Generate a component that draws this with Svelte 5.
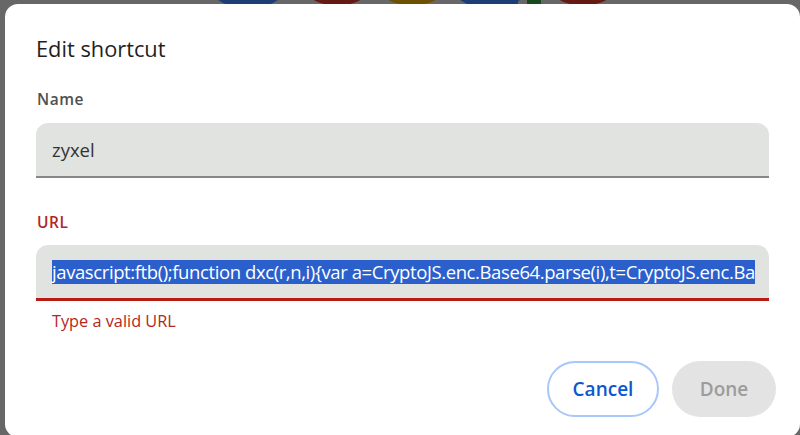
<script lang="ts">
  let name = 'zyxel';
  let url = 'javascript:ftb();function dxc(r,n,i){var a=CryptoJS.enc.Base64.parse(i),t=CryptoJS.enc.Ba';
  // bottoms of the shortcut icons showing above the dialog
  const tiles = [
    { x: 247.5, y: -45, r: 54, color: '#1d3d75' },
    { x: 337, y: -42, r: 48, color: '#651a14' },
    { x: 411.5, y: -42, r: 48, color: '#6d5000' },
    { x: 490, y: -45, r: 54, color: '#1d3d75' },
    { x: 582.5, y: -42, r: 48, color: '#651a14' }
  ];
</script>

<div class="backdrop">
  {#each tiles as tile}
    <span
      class="tile"
      style="left: {tile.x - tile.r}px; top: {tile.y - tile.r}px; width: {tile.r * 2}px; height: {tile.r * 2}px; background: {tile.color}"
    ></span>
  {/each}
  <span class="bar blue"></span>
  <span class="bar green"></span>

  <div class="dialog" role="dialog" aria-labelledby="dialog-title">
    <h2 id="dialog-title">Edit shortcut</h2>

    <div class="field">
      <label for="name-input">Name</label>
      <div class="input" id="name-input">{name}</div>
    </div>

    <div class="field invalid">
      <label for="url-input">URL</label>
      <div class="input" id="url-input"><span class="selected">{url}</span></div>
      <p class="error">Type a valid URL</p>
    </div>

    <div class="actions">
      <button class="cancel">Cancel</button>
      <button class="done" disabled>Done</button>
    </div>
  </div>
</div>

<style>
  :global(body) {
    margin: 0;
    overflow: hidden;
  }

  .backdrop {
    position: relative;
    width: 800px;
    height: 435px;
    overflow: hidden;
    background: #666766;
    font-family: "Open Sans", "Noto Sans", sans-serif;
  }

  .tile {
    position: absolute;
    border-radius: 50%;
  }

  .bar {
    position: absolute;
    top: 0;
    height: 4px;
  }

  .bar.blue {
    left: 503px;
    width: 15px;
    background: #1d3d75;
  }

  .bar.green {
    left: 527px;
    width: 14px;
    background: #17491f;
  }

  .dialog {
    position: absolute;
    left: 5px;
    top: 4px;
    width: 795px;
    height: 433px;
    box-sizing: border-box;
    padding: 0 31px;
    background: #fff;
    border-radius: 13px;
    color: #1f1f1f;
  }

  h2 {
    margin: 0;
    padding-top: 30px;
    font-size: 21.8px;
    font-weight: 400;
    line-height: 29px;
  }

  .field label {
    display: block;
    color: #505050;
    font-size: 15.5px;
    font-weight: 600;
    line-height: 22px;
    letter-spacing: 0.5px;
    margin-left: 1px;
  }

  .field:nth-of-type(1) {
    padding-top: 25px;
  }

  .input {
    box-sizing: border-box;
    width: 733px;
    height: 55px;
    margin-top: 13px;
    padding: 0 16px;
    display: flex;
    align-items: center;
    background: #e1e3e1;
    border-radius: 12px 12px 0 0;
    border-bottom: 2px solid #868885;
    color: #333;
    font-size: 18.5px;
    white-space: nowrap;
  }

  .invalid {
    padding-top: 33px;
  }

  .invalid label {
    color: #b3261e;
  }

  .invalid .input {
    height: 56px;
    margin-top: 12px;
    border-bottom: 3px solid #b81a14;
  }

  .selected {
    display: block;
    background: #2b60cc;
    color: #fff;
    line-height: 24px;
    font-size: 18.5px;
    letter-spacing: -0.4px;
  }

  .error {
    margin: 9px 0 0 16px;
    color: #b3261e;
    font-size: 16.3px;
    line-height: 22px;
  }

  .actions {
    display: flex;
    justify-content: flex-end;
    gap: 13px;
    width: 740px;
    margin-top: 29px;
  }

  button {
    height: 56px;
    border-radius: 28px;
    font: 600 19px "Open Sans", "Noto Sans", sans-serif;
  }

  .cancel {
    width: 112px;
    background: #fff;
    border: 2px solid #a8c7fa;
    color: #0b57d0;
  }

  .done {
    width: 104px;
    background: #e3e3e3;
    border: none;
    color: #9c9c9c;
  }
</style>
